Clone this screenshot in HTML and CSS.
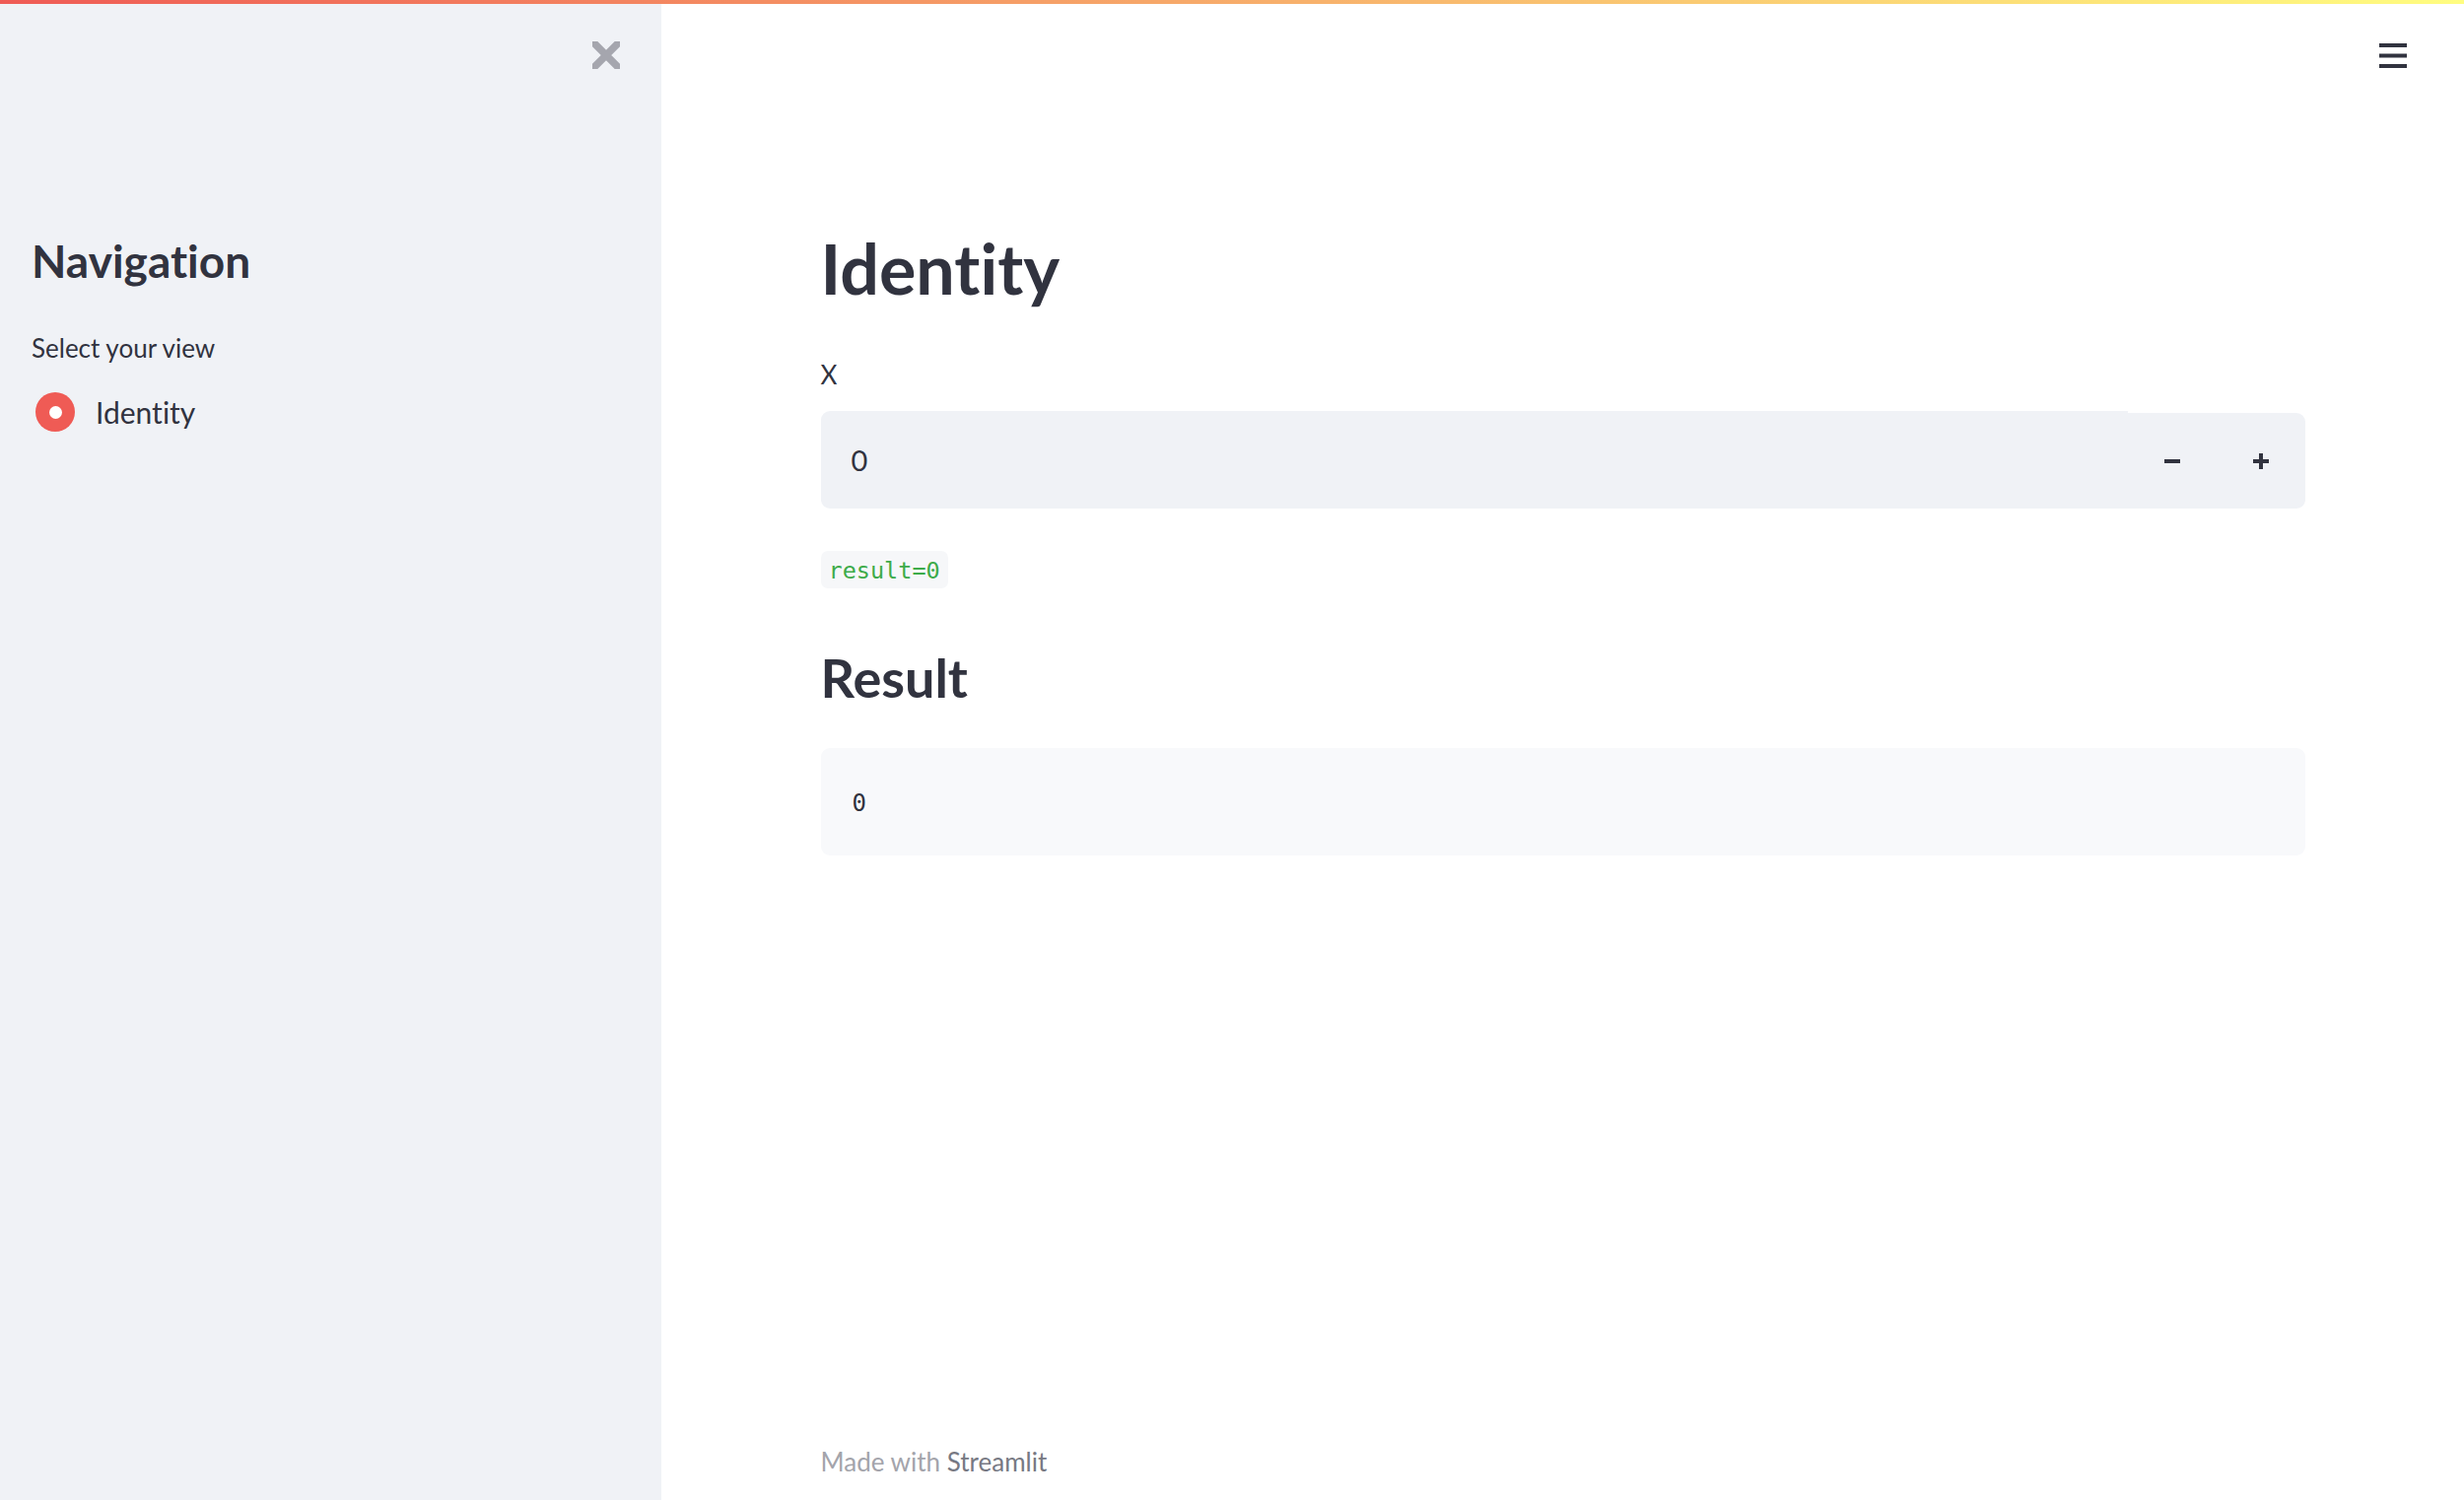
FILE: index.html
```html
<!DOCTYPE html>
<html lang="en">
<head>
<meta charset="utf-8">
<title>Identity</title>
<link rel="stylesheet" href="styles.css">
</head>
<body>
<div class="app">
  <div class="decoration"></div>
  <aside class="sidebar">
    <div class="sb-top">
      <button class="close-btn" aria-label="Close sidebar">
        <svg width="28" height="28" viewBox="0 0 28 28"><path d="M-3 -3 L31 31 M31 -3 L-3 31" stroke="#a5a6ae" stroke-width="7.5" fill="none"/></svg>
      </button>
    </div>
    <h1 class="sb-title">Navigation</h1>
    <div class="sb-label">Select your view</div>
    <label class="radio-opt">
      <span class="radio-dot"></span>
      <span class="radio-text">Identity</span>
    </label>
  </aside>
  <main class="main">
    <header class="topbar">
      <button class="menu-btn" aria-label="Menu">
        <svg width="28" height="26" viewBox="0 0 28 26"><rect x="0" y="0" width="28" height="4" fill="#31333f"/><rect x="0" y="10.5" width="28" height="4" fill="#31333f"/><rect x="0" y="21" width="28" height="4" fill="#31333f"/></svg>
      </button>
    </header>
    <section class="content">
      <h1 class="title">Identity</h1>
      <div class="field-label">X</div>
      <div class="number-input">
        <div class="ni-value">0</div>
        <div class="ni-buttons">
          <button class="ni-btn" aria-label="Decrement">
            <svg width="16" height="16" viewBox="0 0 16 16"><rect x="0" y="6" width="16" height="4" fill="#31333f"/></svg>
          </button>
          <button class="ni-btn" aria-label="Increment">
            <svg width="16" height="16" viewBox="0 0 16 16"><rect x="0" y="6" width="16" height="4" fill="#31333f"/><rect x="6" y="0" width="4" height="16" fill="#31333f"/></svg>
          </button>
        </div>
      </div>
      <p class="inline-code-row"><code class="inline-code">result=0</code></p>
      <h2 class="subtitle">Result</h2>
      <pre class="code-block"><code>0</code></pre>
    </section>
    <footer class="footer">Made with <span class="footer-link">Streamlit</span></footer>
  </main>
</div>
</body>
</html>
```

FILE: styles.css
```css
* { box-sizing: border-box; }
html, body { margin: 0; padding: 0; }
body {
  font-family: Lato, "Noto Sans", sans-serif;
  font-variant-ligatures: none;
  color: #31333f;
  background: #ffffff;
  overflow: hidden;
}
button { font: inherit; cursor: pointer; }

.app {
  position: relative;
  display: flex;
  height: 1522px;
}
.decoration {
  position: absolute;
  top: 0; left: 0; right: 0;
  height: 4px;
  background: linear-gradient(90deg, #ef5b55, #fffd80);
  z-index: 10;
}

/* Sidebar */
.sidebar {
  flex: none;
  width: 671px;
  background: #f0f2f6;
  padding-left: 32px;
}
.sb-top {
  height: 112px;
  display: flex;
  align-items: center;
  justify-content: flex-end;
  padding-right: 42px;
}
.close-btn {
  width: 28px; height: 28px;
  padding: 0; border: 0; background: none;
  display: block;
}
.close-btn svg { display: block; }
.sb-title {
  margin: 125px 0 0;
  font-size: 46px;
  font-weight: 700;
  line-height: 1.2;
}
.sb-label {
  margin-top: 46px;
  font-size: 26px;
  line-height: 1.2;
}
.radio-opt {
  margin-top: 29px;
  display: flex;
  align-items: center;
  gap: 21px;
  padding-left: 4px;
  height: 40px;
}
.radio-dot {
  width: 40px; height: 40px;
  border-radius: 50%;
  background: #ef5b55;
  display: flex;
  align-items: center;
  justify-content: center;
}
.radio-dot::after {
  content: "";
  width: 13px; height: 13px;
  border-radius: 50%;
  background: #ffffff;
}
.radio-text {
  font-size: 30px;
  line-height: 40px;
}

/* Main */
.main {
  flex: 1;
  display: flex;
  flex-direction: column;
  min-width: 0;
}
.topbar {
  height: 114px;
  display: flex;
  justify-content: flex-end;
  align-items: flex-start;
  padding: 44px 58px 0 0;
}
.menu-btn {
  padding: 0; border: 0; background: none; display: block;
}
.menu-btn svg { display: block; }
.content {
  width: 1506px;
  margin: 0 auto;
  padding-top: 116px;
  flex: 1;
}
.title {
  margin: 0;
  font-size: 70px;
  font-weight: 700;
  line-height: 1.2;
}
.field-label {
  margin-top: 51px;
  font-size: 26px;
  line-height: 1.2;
}
.number-input {
  margin-top: 21px;
  display: flex;
  align-items: flex-end;
  height: 99px;
}
.ni-value {
  flex: 1;
  height: 99px;
  background: #f0f2f6;
  border-radius: 9px 0 0 9px;
  display: flex;
  align-items: center;
  padding-left: 31px;
  font-size: 29px;
}
.ni-buttons {
  display: flex;
  height: 97px;
  background: #f0f2f6;
  border-radius: 0 9px 9px 0;
}
.ni-btn {
  width: 90px;
  height: 97px;
  border: 0;
  background: none;
  padding: 0;
  display: flex;
  align-items: center;
  justify-content: center;
}
.ni-btn svg { display: block; }
.inline-code-row {
  margin: 43px 0 0;
  line-height: 0;
}
.inline-code {
  display: inline-block;
  font-family: "DejaVu Sans Mono", "Liberation Mono", monospace;
  font-size: 23.5px;
  line-height: 34px;
  padding: 3px 8px 1px;
  color: #3dab4a;
  background: #f6f7f9;
  border-radius: 7px;
}
.subtitle {
  margin: 59px 0 0;
  font-size: 54px;
  font-weight: 700;
  line-height: 1.2;
}
.code-block {
  margin: 38px 0 0;
  height: 109px;
  background: #f8f9fb;
  border-radius: 9px;
  display: flex;
  align-items: center;
  padding: 3px 0 0 32px;
  font-family: "DejaVu Sans Mono", "Liberation Mono", monospace;
  font-size: 24px;
  color: #31333f;
}
.footer {
  width: 1506px;
  margin: 0 auto 23px;
  font-size: 26px;
  line-height: 1.2;
  color: #a3a4ab;
}
.footer-link { color: #777983; }
```
